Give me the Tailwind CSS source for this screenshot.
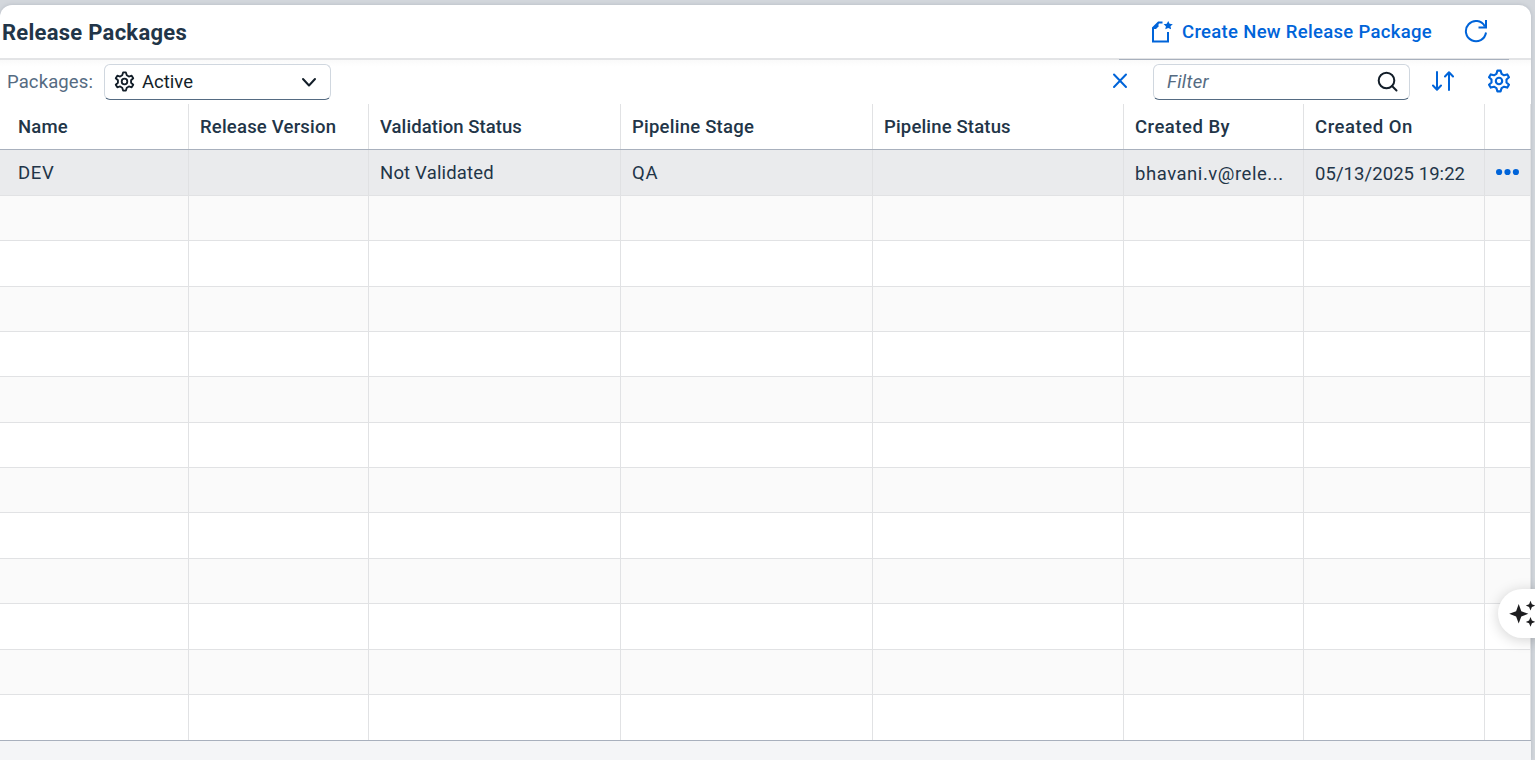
<!DOCTYPE html>
<html lang="en">
<head>
<meta charset="utf-8">
<title>Release Packages</title>
<script src="https://cdn.jsdelivr.net/npm/@tailwindcss/browser@4"></script>
</head>
<body class="relative h-[760px] w-[1535px] overflow-hidden bg-[#d3d7dc] font-[Roboto,sans-serif] text-[18.5px] leading-6 text-[#223548]">
<svg class="hidden">
  <symbol id="gear" viewBox="0 0 24 24"><path d="M9.4 4.9 10.4 1.6H13.6L14.6 4.9 17 6.3 20.2 5.4 22 8.3 19.5 10.6V13.4L22 15.7 20.2 18.6 17 17.7 14.6 19.1 13.6 22.4H10.4L9.4 19.1 7 17.7 3.8 18.6 2 15.7 4.5 13.4V10.6L2 8.3 3.8 5.4 7 6.3Z" fill="none" stroke="currentColor" stroke-width="2.1" stroke-linejoin="round"/><circle cx="12" cy="12" r="3.2" fill="none" stroke="currentColor" stroke-width="2.1"/></symbol>
</svg>
<main class="h-[760px] w-[1535px] pt-[5px]">
  <section class="flex h-[755px] w-[1531px] flex-col overflow-hidden rounded-t-xl bg-white shadow-[0_0_4px_#b4bac3]">
    <header class="flex h-[53px] shrink-0 items-center pl-[2px] pr-[43px]">
      <h1 class="pt-[2px] text-[22px] font-bold tracking-[0.27px]">Release Packages</h1>
      <button class="ml-auto flex items-center gap-[9px] font-medium text-[#0064d9]">
        <svg class="size-[22px]" viewBox="0 0 22 22" fill="none" stroke="currentColor" stroke-width="2"><path d="M11.5 1.5H7.5L2 7V20.5H17V11"/><path d="M1 8 7.5 1V5.5L5 8Z" fill="currentColor" stroke="none"/><path d="M17.2 0l1.4 2.8 3.2.4-2.3 2.1.6 3-2.9-1.4-2.9 1.4.6-3-2.3-2.1 3.2-.4Z" fill="currentColor" stroke="none"/></svg>
        <span class="tracking-[0.31px]">Create New Release Package</span>
      </button>
      <svg class="mb-[2px] ml-[32px] size-[24px] text-[#0064d9]" viewBox="0 0 24 24" fill="none" stroke="currentColor" stroke-width="2"><path d="M22 13.5A10.1 10.1 0 1 1 20.8 7.2M22 1V8.5H14.5"/></svg>
    </header>
    <div class="flex h-[2px] shrink-0 flex-col bg-[#e3e4e6] pr-[22px]"><div class="mt-px ml-auto h-px w-[390px] bg-[#a8b0bd]"></div></div>
    <div class="flex h-[44px] shrink-0 items-center bg-gradient-to-b from-[#fafafa] to-white to-15% pl-[7px] pr-[20px]">
      <label class="w-[97px] tracking-[0.11px] text-[#556b82]">Packages:</label>
      <div class="flex h-[36px] w-[227px] items-center rounded-md border border-[#d0d7df] border-b-[#556b82] bg-white pl-[9px] pr-[13px] text-[#131e29]">
        <svg class="mb-[2px] size-[21px]"><use href="#gear"/></svg>
        <span class="ml-[7px]">Active</span>
        <svg class="ml-auto h-[10px] w-[16px]" viewBox="0 0 16 10" fill="none" stroke="currentColor" stroke-width="2" stroke-linecap="round" stroke-linejoin="round"><path d="M2 2 8 8.5 14 2"/></svg>
      </div>
      <svg class="mb-[2px] ml-auto size-[16px] text-[#0064d9]" viewBox="0 0 16 16" fill="none" stroke="currentColor" stroke-width="2" stroke-linecap="round"><path d="M2 1.5 14 14M14 1.5 2 14"/></svg>
      <div class="ml-[25px] flex h-[36px] w-[257px] items-center rounded-md border border-[#d0d7df] border-b-[#556b82] bg-white pl-[13px] pr-[11px]">
        <span class="tracking-[0.28px] text-[#556b82] italic">Filter</span>
        <svg class="mb-[2px] ml-auto size-[21px] text-[#131e29]" viewBox="0 0 21 21" fill="none" stroke="currentColor" stroke-width="2" stroke-linecap="round"><circle cx="9.5" cy="9.5" r="7.8"/><path d="m15 15 4.5 4.5"/></svg>
      </div>
      <svg class="mb-[2px] ml-[21px] h-[20px] w-[24px] text-[#0064d9]" viewBox="0 0 24 20" fill="none" stroke="currentColor" stroke-width="2" stroke-linecap="round" stroke-linejoin="round"><path d="M6 1V18.5M2 14.5 6 18.7 10 14.5M18 19V1.5M14 5.5 18 1.3 22 5.5"/></svg>
      <svg class="mb-[2px] ml-[32px] size-[24px] text-[#0064d9]"><use href="#gear"/></svg>
    </div>
    <div id="table" class="shrink-0">
      <div class="grid h-[46px] grid-cols-[189px_180px_252px_252px_251px_180px_181px_46px] border-b border-[#a8b0bd] font-medium *:border-r *:border-[#e1e2e4] *:pt-[11px] *:pl-[11px] *:whitespace-nowrap">
        <div><span class="ml-[7px] tracking-[0.22px]">Name</span></div>
        <div class="tracking-[0.2px]">Release Version</div>
        <div class="tracking-[0.06px]">Validation Status</div>
        <div class="tracking-[0.23px]">Pipeline Stage</div>
        <div class="tracking-[0.16px]">Pipeline Status</div>
        <div class="tracking-[0.5px]">Created By</div>
        <div class="tracking-[0.55px]">Created On</div>
        <div></div>
      </div>
      <div class="grid h-[46px] grid-cols-[189px_180px_252px_252px_251px_180px_181px_46px] border-b border-[#e1e2e4] bg-[#eaebed] *:border-r *:border-[#e0e1e3] *:pt-[11px] *:pl-[11px] *:whitespace-nowrap">
        <div><span class="ml-[7px] tracking-[0.7px]">DEV</span></div>
        <div></div>
        <div class="tracking-[0.18px]">Not Validated</div>
        <div class="tracking-[0.8px]">QA</div>
        <div></div>
        <div><span class="block pt-px tracking-[0.54px]">bhavani.v@rele...</span></div>
        <div><span class="block pt-px tracking-[0.06px]">05/13/2025 19:22</span></div>
        <div><svg class="mt-[7px] h-[8px] w-[24px] text-[#0064d9]" viewBox="0 0 24 8" fill="currentColor"><circle cx="3.1" cy="4" r="3.1"/><circle cx="11.5" cy="4" r="3.1"/><circle cx="19.9" cy="4" r="3.1"/></svg></div>
      </div>
    </div>
    <div class="grow bg-[#f4f5f7]"></div>
  </section>
</main>
<div class="absolute top-[589px] left-[1498px] flex h-[49px] w-[60px] items-center rounded-l-full bg-white pl-[11px] shadow-[0_2px_14px_rgba(0,0,0,0.18)]">
  <svg class="h-[28px] w-[28px] shrink-0 text-[#1d1d1f]" viewBox="0 0 28 28" fill="currentColor"><path d="M9.7 4 12.3 11.2 19.3 13.8 12.3 16.4 9.7 23.4 7.1 16.4 .2 13.8 7.1 11.2ZM21.5 .8 22.9 4.3 26.2 5.6 22.9 6.9 21.5 10.4 20.1 6.9 16.8 5.6 20.1 4.3ZM21.5 17.1 22.9 20.6 26.2 21.9 22.9 23.2 21.5 26.7 20.1 23.2 16.8 21.9 20.1 20.6Z"/></svg>
</div>
<script>
  const table = document.getElementById('table');
  const heights = [45, 46, 45, 45, 46, 45, 45, 46, 45, 46, 45, 46];
  heights.forEach((height, i) => {
    const row = document.createElement('div');
    row.className = 'grid grid-cols-[189px_180px_252px_252px_251px_180px_181px_46px] border-b *:border-r *:border-[#e1e2e4] ' +
      (i % 2 ? 'bg-white ' : 'bg-[#fafafa] ') + (i === heights.length - 1 ? 'border-[#a8b0bd]' : 'border-[#e1e2e4]');
    row.style.height = height + 'px';
    row.innerHTML = '<div></div>'.repeat(8);
    table.append(row);
  });
</script>
</body>
</html>
